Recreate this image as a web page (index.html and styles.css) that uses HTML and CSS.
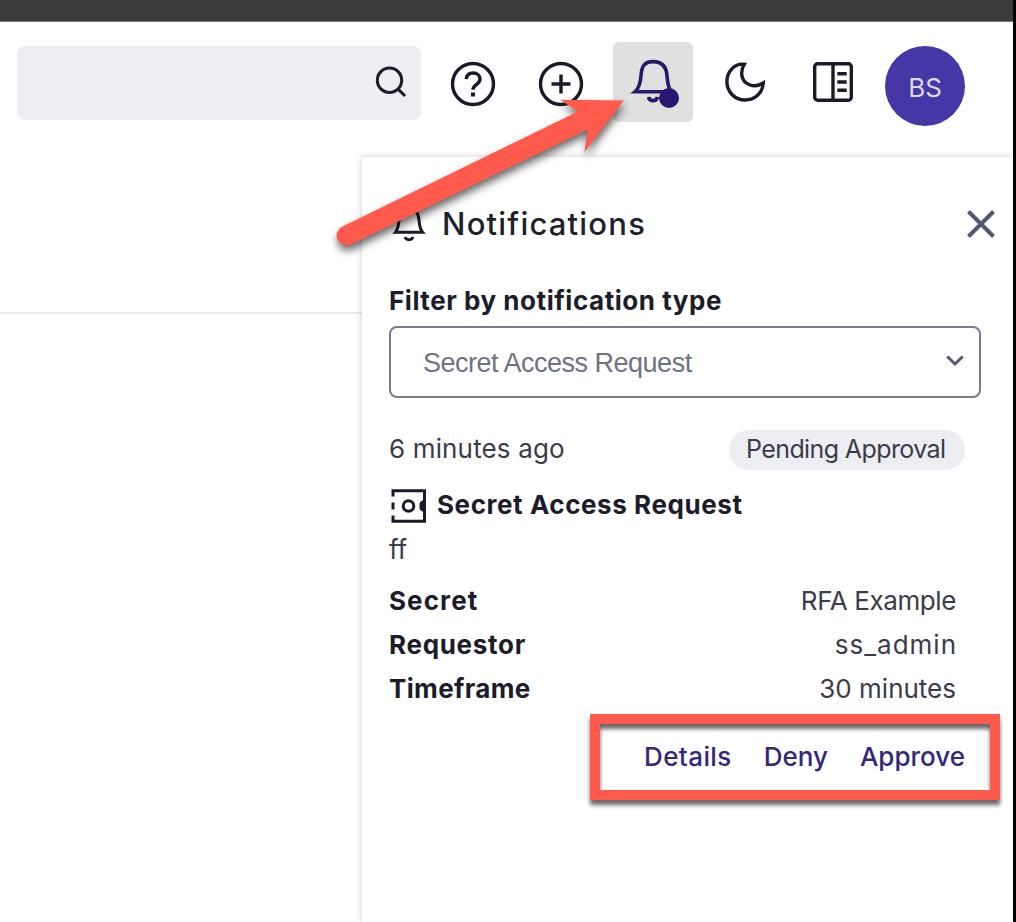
FILE: index.html
```html
<!DOCTYPE html>
<html lang="en">
<head>
<meta charset="utf-8">
<title>Notifications</title>
<link rel="stylesheet" href="styles.css">
</head>
<body>
<div class="app">
  <div class="window-bar"></div>
  <header class="header">
    <div class="search">
      <svg class="search-icon" viewBox="0 0 34 34"><circle cx="15.500" cy="15.200" r="12.200"/><path d="M24 24l7 7"/></svg>
    </div>
    <div class="tool help">
      <svg class="icon" viewBox="0 0 48 48"><circle cx="24" cy="24" r="20.500"/><path d="M17.300 19.200c.3-4 3-6.200 6.700-6.200 4.200 0 7 2.500 7 6 0 3-1.800 4.400-3.800 5.700-2.200 1.500-3.200 2.600-3.200 5" /><path class="dot" d="M22 32.500h4v4h-4z"/></svg>
    </div>
    <div class="tool add">
      <svg class="icon" viewBox="0 0 48 48"><circle cx="24" cy="24" r="20.500"/><path d="M24 14.500v19M14.500 24h19"/></svg>
    </div>
    <div class="tool alerts">
      <svg class="icon bell" viewBox="0 0 48 48"><path d="M6 33.800h36c-3-4-3.400-9-4-16C37.400 8.500 33 3.600 24 3.600S12.600 8.500 12 17.800c-.6 7-1.500 12-6 16z"/><path d="M19.500 39c.5 2.300 2 3.600 4.500 3.600s4-1.300 4.500-3.600"/><circle class="dot" cx="40" cy="40" r="10"/></svg>
    </div>
    <div class="tool theme">
      <svg class="icon" viewBox="0 0 48 48"><path d="M23.200 6.300C14 5 5.900 13.500 5.900 23.500c0 10.500 8.100 18.500 18.100 18.500 9.700 0 17.700-7 18.300-17C33.500 31 21.500 26.500 20.700 16.300c-.2-3.600.6-7 2.500-10z"/></svg>
    </div>
    <div class="tool layout">
      <svg class="icon" viewBox="0 0 48 48"><rect x="5.700" y="5.700" width="36.600" height="36.600" rx="3"/><path d="M24 5v38"/><path d="M28.300 15.700h9.400M28.300 24h9.400M28.300 32.200h9.400"/></svg>
    </div>
    <div class="avatar">BS</div>
  </header>
  <div class="content">
    <div class="page"></div>
    <aside class="panel">
      <div class="panel-head">
        <svg class="title-bell" viewBox="0 0 34 34"><path d="M3.500 25.200h27c-2.600-3-3-6.500-3.500-12C26.400 5.500 23.500 1.500 17 1.500S7.600 5.500 7 13.200c-.5 5.500-.9 9-3.500 12z"/><path d="M13.200 30c.5 2 1.900 2.700 3.800 2.700s3.300-.7 3.800-2.700"/></svg>
        <h1 class="title">Notifications</h1>
        <svg class="close" viewBox="0 0 28 28"><path d="M1.500 1.500l25 25M26.500 1.500l-25 25"/></svg>
      </div>
      <div class="filter-label">Filter by notification type</div>
      <div class="select">
        <span class="select-value">Secret Access Request</span>
        <svg class="chevron" viewBox="0 0 18 12"><path d="M1.300 1.500L9 9l7.700-7.500"/></svg>
      </div>
      <div class="status-row">
        <span class="ago">6 minutes ago</span>
        <span class="pill">Pending Approval</span>
      </div>
      <div class="request-row">
        <svg class="request-icon" viewBox="0 0 36 36"><path d="M2 8.500V2.700h31.500v30.600H2v-5.800M2 14.500v7"/><circle cx="17.500" cy="18" r="5.300"/><path class="solid" d="M35 12.500h-4l-2.500 2.500v6l2.500 2.500h4z"/></svg>
        <span class="request-title">Secret Access Request</span>
      </div>
      <div class="comment">ff</div>
      <dl class="details">
        <div class="detail"><dt class="key-secret">Secret</dt><dd class="value-secret">RFA Example</dd></div>
        <div class="detail"><dt class="key-requestor">Requestor</dt><dd class="value-requestor">ss_admin</dd></div>
        <div class="detail"><dt class="key-time">Timeframe</dt><dd>30 minutes</dd></div>
      </dl>
      <div class="actions">
        <a class="action-details">Details</a>
        <a>Deny</a>
        <a>Approve</a>
      </div>
    </aside>
  </div>
</div>
<div class="highlight"></div>
<svg class="arrow" viewBox="0 0 330 190"><path d="M21.500 137L258 21.500 240 9.700 304 10.500 264.500 62 267.500 39.500 30 155a10 10 0 0 1-8.500-18z"/></svg>
</body>
</html>
```

FILE: styles.css
```css
* { box-sizing: border-box; }

body {
  margin: 0;
  width: 1016px;
  height: 922px;
  overflow: hidden;
  background: #000;
  font-family: Inter, "Liberation Sans", sans-serif;
  font-size: 26px;
  color: #3b3b49;
}

.app {
  width: 1013px;
  height: 922px;
  background: #fff;
  display: flex;
  flex-direction: column;
  overflow: hidden;
}

.window-bar {
  height: 22px;
  flex: none;
  background: #3c3c3c;
  border-bottom: 1px solid #7a7a7a;
}

.header {
  height: 135px;
  flex: none;
  display: flex;
  align-items: flex-start;
  padding: 20px 0 0 17px;
}

.search {
  width: 404px;
  height: 74px;
  margin: 4px 12px 0 0;
  border-radius: 8px;
  background: #edeef2;
  display: flex;
  justify-content: flex-end;
  padding: 19px 13px 0 0;
}

.search-icon { width: 34px; height: 34px; }

svg {
  fill: none;
  stroke: #1a1a29;
  stroke-width: 3;
  flex: none;
}

.tool {
  width: 80px;
  height: 80px;
  display: flex;
  align-items: center;
  justify-content: center;
  border-radius: 6px;
}

.icon { width: 48px; height: 48px; stroke-width: 3.4; }
.icon .dot { fill: #1a1a29; stroke: none; }
.help { padding-top: 4px; margin-right: 8px; }
.add { padding-top: 4px; margin-right: 12px; }
.alerts { background: #e0e0e0; margin-right: 12px; }
.theme { margin-right: 8px; }
.layout { margin-right: 12px; }
.icon.bell { stroke: #291866; stroke-width: 3.6; overflow: visible; }
.icon.bell .dot { fill: #291670; }

.avatar {
  width: 80px;
  height: 80px;
  margin-top: 4px;
  border-radius: 50%;
  background: #4537a5;
  color: #dcd9f2;
  font-size: 26px;
  line-height: 83px;
  text-align: center;
}

.content { flex: 1; display: flex; }

.page {
  width: 362px;
  height: 157px;
  flex: none;
  border-bottom: 2px solid #ebebeb;
}

.panel {
  flex: 1;
  padding-left: 27px;
  background: #fff;
  box-shadow: 0 0 7px rgba(0, 0, 0, .2);
}

.panel-head {
  height: 132px;
  display: flex;
  align-items: center;
  padding: 1px 18px 0 3px;
}

.title-bell { width: 34px; height: 34px; overflow: visible; }

.title {
  margin: 0 0 0 16px;
  flex: 1;
  font-size: 31px;
  line-height: 36px;
  font-weight: 500;
  letter-spacing: 1.2px;
  color: #1f1f2e;
}

.close { width: 28px; height: 28px; stroke: #555870; stroke-width: 4; }

.filter-label {
  height: 24px;
  line-height: 24px;
  font-weight: 700;
  letter-spacing: .54px;
  color: #1c1c2b;
}

.select {
  width: 592px;
  height: 72px;
  margin-top: 13px;
  border: 2px solid #787b91;
  border-radius: 8px;
  display: flex;
  align-items: center;
  justify-content: space-between;
  padding: 0 15px 0 32px;
  font-family: "Liberation Sans", sans-serif;
  font-size: 27px;
  letter-spacing: -.5px;
  color: #6f7282;
}

.select-value { padding-top: 2px; }
.chevron { width: 18px; height: 12px; margin-bottom: 2px; stroke: #555870; }

.status-row {
  width: 576px;
  height: 40px;
  margin-top: 32px;
  display: flex;
  justify-content: space-between;
  line-height: 38px;
}

.ago { letter-spacing: .15px; }

.pill {
  width: 236px;
  padding-left: 17px;
  border-radius: 20px;
  background: #edeef2;
  font-size: 25px;
  line-height: 39px;
  letter-spacing: -.6px;
  white-space: nowrap;
}

.request-row {
  height: 44px;
  margin-top: 13px;
  display: flex;
  align-items: center;
  padding-left: 2px;
  font-weight: 700;
  color: #1c1c2b;
}

.request-icon { width: 36px; height: 36px; margin: 1px 10px 0 0; }
.request-icon .solid { fill: #1a1a29; stroke: none; }
.request-title { letter-spacing: .57px; line-height: 42px; padding-bottom: 1px; }

.comment { height: 44px; line-height: 46px; }

.details { margin: 8px 0 0; width: 567px; }

.detail {
  height: 44px;
  line-height: 44px;
  display: flex;
  justify-content: space-between;
}

.detail dt { font-weight: 700; color: #1c1c2b; }
.detail dd { margin: 0; }
.key-secret { letter-spacing: 1.1px; }
.key-requestor { letter-spacing: .7px; }
.key-time { letter-spacing: .35px; }
.value-secret { letter-spacing: -.4px; }
.detail .value-requestor { letter-spacing: 1px; margin-right: -1px; }

.actions {
  width: 576px;
  height: 44px;
  margin-top: 24px;
  line-height: 44px;
  display: flex;
  justify-content: flex-end;
  gap: 32px;
  font-weight: 500;
  color: #35267a;
}

.action-details { letter-spacing: .4px; }

/* Callouts drawn over the page */
.highlight {
  position: absolute;
  left: 590px;
  top: 714px;
  width: 410px;
  height: 86px;
  border: 10px solid #ff5a4c;
  filter: drop-shadow(0 5px 2px rgba(0, 0, 0, .6));
}

.arrow {
  position: absolute;
  left: 320px;
  top: 90px;
  width: 330px;
  height: 190px;
  overflow: visible;
  filter: drop-shadow(1px 5px 4px rgba(0, 0, 0, .6));
}

.arrow path { fill: #ff5a4c; stroke: none; }
```
